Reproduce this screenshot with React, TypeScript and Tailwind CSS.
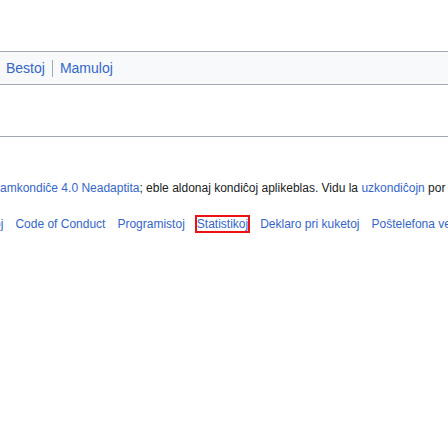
const links = ["Malgarantioj", "Code of Conduct", "Programistoj", "Statistikoj", "Deklaro pri kuketoj", "Poŝtelefona versio"];

export default function App() {
  return (
    <div className="w-[448px] h-[448px] overflow-hidden bg-white font-['Liberation_Sans',Arial,sans-serif] text-[#202122]">
      <div className="pt-[51px]">
        <div className="h-[34px] border-y border-[#a2a9b1] bg-[#f8f9fa] flex items-center pl-[6px] text-[14px]">
          <a className="text-[#36c]">Bestoj</a>
          <span className="mx-[7px] h-[17px] w-px bg-[#a2a9b1]" />
          <a className="text-[#36c]">Mamuloj</a>
        </div>
      </div>

      <div className="mt-[51px] h-px bg-[#a2a9b1]" />

      <p className="mt-[43px] ml-[-8px] whitespace-nowrap text-[12px] leading-[16px]">
        <a className="text-[#36c]">Samkondiĉe 4.0 Neadaptita</a>; eble aldonaj kondiĉoj aplikeblas. Vidu la{" "}
        <a className="text-[#36c]">uzkondiĉojn</a> por detaloj.
      </p>

      <ul className="mt-[20px] ml-[-62px] flex gap-[12px] whitespace-nowrap text-[12px] leading-[16px]">
        {links.map((l) => (
          <li key={l}>
            <a
              className={
                l === "Statistikoj"
                  ? "text-[#36c] outline-2 outline-[#ee1111] outline-offset-0"
                  : "text-[#36c]"
              }
            >
              {l}
            </a>
          </li>
        ))}
      </ul>
    </div>
  );
}
